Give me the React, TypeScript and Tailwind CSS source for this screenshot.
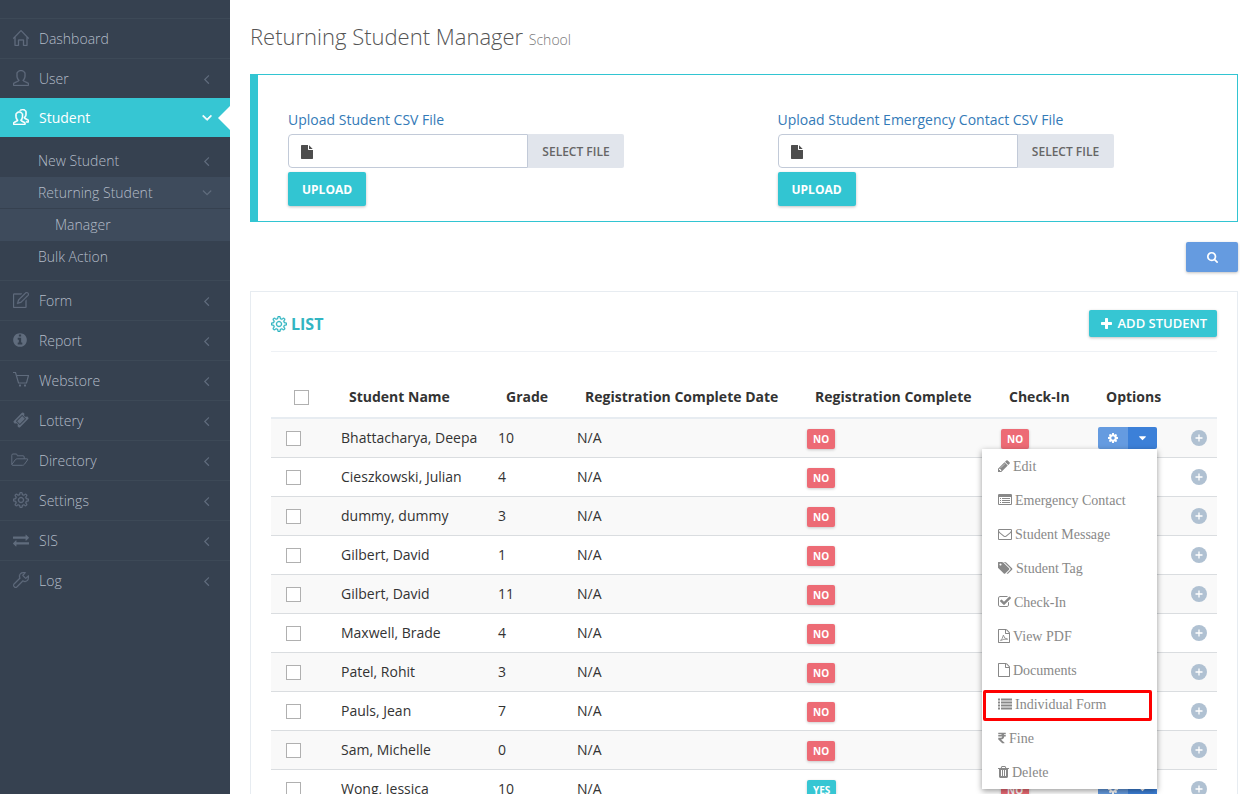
import { useState } from 'react';
import type { ReactNode } from 'react';
import { SlHome, SlNote, SlPeople, SlSettings, SlUser, SlWrench } from 'react-icons/sl';
import { FaRupeeSign } from 'react-icons/fa';

// Font Awesome 4 glyphs on their 1792 grid, w is the glyph's own advance
const GLYPHS = {
  angleLeft: { w: 768, d: 'M1203 544q0 13-10 23l-393 393 393 393q10 10 10 23t-10 23l-50 50q-10 10-23 10t-23-10l-466-466q-10-10-10-23t10-23l466-466q10-10 23-10t23 10l50 50q10 10 10 23z' },
  info: { w: 1536, d: 'M1152 1376v-160q0-14-9-23t-23-9h-96v-512q0-14-9-23t-23-9h-320q-14 0-23 9t-9 23v160q0 14 9 23t23 9h96v320h-96q-14 0-23 9t-9 23v160q0 14 9 23t23 9h448q14 0 23-9t9-23zm-128-896v-160q0-14-9-23t-23-9h-192q-14 0-23 9t-9 23v160q0 14 9 23t23 9h192q14 0 23-9t9-23zm640 416q0 209-103 385.5t-279.5 279.5-385.5 103-385.5-103-279.5-279.5-103-385.5 103-385.5 279.5-279.5 385.5-103 385.5 103 279.5 279.5 103 385.5z' },
  ticket: { w: 1792, d: 'M1024 452l316 316-572 572-316-316zm-211 979l618-618q19-19 19-45t-19-45l-362-362q-18-18-45-18t-45 18l-618 618q-19 19-19 45t19 45l362 362q18 18 45 18t45-18zm889-637l-907 908q-37 37-90.5 37t-90.5-37l-126-125q56-56 56-136t-56-136-136-56-136 56l-125-126q-37-37-37-90.5t37-90.5l907-906q37-37 90.5-37t90.5 37l125 125q-56 56-56 136t56 136 136 56 136-56l126 125q37 37 37 90.5t-37 90.5z' },
  exchange: { w: 1792, d: 'M1792 1184v192q0 13-9.5 22.5t-22.5 9.5h-1376v192q0 13-9.5 22.5t-22.5 9.5q-12 0-24-10l-319-320q-9-9-9-22 0-14 9-23l320-320q9-9 23-9 13 0 22.5 9.5t9.5 22.5v192h1376q13 0 22.5 9.5t9.5 22.5zm0-544q0 14-9 23l-320 320q-9 9-23 9-13 0-22.5-9.5t-9.5-22.5v-192h-1376q-13 0-22.5-9.5t-9.5-22.5v-192q0-13 9.5-22.5t22.5-9.5h1376v-192q0-14 9-23t23-9q12 0 24 10l319 319q9 9 9 23z' },
  file: { w: 1536, d: 'M1152 512v-472q22 14 36 28l408 408q14 14 28 36h-472zm-128 32q0 40 28 68t68 28h544v1056q0 40-28 68t-68 28h-1344q-40 0-68-28t-28-68v-1600q0-40 28-68t68-28h800v544z' },
  search: { w: 1664, d: 'M1216 832q0-185-131.5-316.5t-316.5-131.5-316.5 131.5-131.5 316.5 131.5 316.5 316.5 131.5 316.5-131.5 131.5-316.5zm512 832q0 52-38 90t-90 38q-54 0-90-38l-343-342q-179 124-399 124-143 0-273.5-55.5t-225-150-150-225-55.5-273.5 55.5-273.5 150-225 225-150 273.5-55.5 273.5 55.5 225 150 150 225 55.5 273.5q0 220-124 399l343 343q37 37 37 90z' },
  plus: { w: 1408, d: 'M1600 736v192q0 40-28 68t-68 28h-416v416q0 40-28 68t-68 28h-192q-40 0-68-28t-28-68v-416h-416q-40 0-68-28t-28-68v-192q0-40 28-68t68-28h416v-416q0-40 28-68t68-28h192q40 0 68 28t28 68v416h416q40 0 68 28t28 68z' },
  cog: { w: 1536, d: 'M1152 896q0-106-75-181t-181-75-181 75-75 181 75 181 181 75 181-75 75-181zm512-109v222q0 12-8 23t-20 13l-185 28q-19 54-39 91 35 50 107 138 10 12 10 25t-9 23q-27 37-99 108t-94 71q-12 0-26-9l-138-108q-44 23-91 38-16 136-29 186-7 28-36 28h-222q-14 0-24.5-8.5t-11.5-21.5l-28-184q-49-16-90-37l-141 107q-10 9-25 9-14 0-25-11-126-114-165-168-7-10-7-23 0-12 8-23 15-21 51-66.5t54-70.5q-27-50-41-99l-183-27q-13-2-21-12.5t-8-23.5v-222q0-12 8-23t19-13l186-28q14-46 39-92-40-57-107-138-10-12-10-24 0-10 9-23 26-36 98.5-107.5t94.5-71.5q13 0 26 10l138 107q44-23 91-38 16-136 29-186 7-28 36-28h222q14 0 24.5 8.5t11.5 21.5l28 184q49 16 90 37l142-107q9-9 24-9 13 0 25 10 129 119 165 170 7 8 7 22 0 12-8 23-15 21-51 66.5t-54 70.5q26 50 41 98l183 28q13 2 21 12.5t8 23.5z' },
  caret: { w: 1024, d: 'M1408 704q0 26-19 45l-448 448q-19 19-45 19t-45-19l-448-448q-19-19-19-45t19-45 45-19h896q26 0 45 19t19 45z' },
  pencil: { w: 1536, d: 'M491 1536l91-91-235-235-91 91v107h128v128h107zm523-928q0-22-22-22-10 0-17 7l-542 542q-7 7-7 17 0 22 22 22 10 0 17-7l542-542q7-7 7-17zm-54-192l416 416-832 832h-416v-416zm683 96q0 53-37 90l-166 166-416-416 166-165q36-38 90-38 53 0 91 38l235 234q37 39 37 91z' },
  listAlt: { w: 1792, d: 'M256 640h128v128h-128zM256 896h128v128h-128zM256 1152h128v128h-128zM512 640h1024v128h-1024zM512 896h1024v128h-1024zM512 1152h1024v128h-1024zM1664 1376v-832q0-13-9.5-22.5t-22.5-9.5h-1472q-13 0-22.5 9.5t-9.5 22.5v832q0 13 9.5 22.5t22.5 9.5h1472q13 0 22.5-9.5t9.5-22.5zM1792 288v1088q0 66-47 113t-113 47h-1472q-66 0-113-47t-47-113v-1088q0-66 47-113t113-47h1472q66 0 113 47t47 113z' },
  envelope: { w: 1792, d: 'M1664 1504v-768q-32 36-69 66-268 206-426 338-51 43-83 67t-86.5 48.5-102.5 24.5h-2q-48 0-102.5-24.5t-86.5-48.5-83-67q-158-132-426-338-37-30-69-66v768q0 13 9.5 22.5t22.5 9.5h1472q13 0 22.5-9.5t9.5-22.5zm0-1051v-24.5l-.5-13-3-12.5-5.5-9-9-7.5-14-2.5h-1472q-13 0-22.5 9.5t-9.5 22.5q0 168 147 284 193 152 401 317 6 5 35 29.5t46 37.5 44.5 31.5 50.5 27.5 43 9h2q20 0 43-9t50.5-27.5 44.5-31.5 46-37.5 35-29.5q208-165 401-317 54-43 100.5-115.5t46.5-131.5zm128-37v1088q0 66-47 113t-113 47h-1472q-66 0-113-47t-47-113v-1088q0-66 47-113t113-47h1472q66 0 113 47t47 113z' },
  tags: { w: 1920, d: 'M448 448q0-53-37.5-90.5t-90.5-37.5-90.5 37.5-37.5 90.5 37.5 90.5 90.5 37.5 90.5-37.5 37.5-90.5zm1003 576q0 53-37 90l-491 492q-39 37-91 37-53 0-90-37l-715-716q-38-37-64.5-101t-26.5-117v-416q0-52 38-90t90-38h416q53 0 117 26.5t102 64.5l715 714q37 39 37 91zm384 0q0 53-37 90l-491 492q-39 37-91 37-36 0-59-14t-53-45l470-470q37-37 37-90 0-52-37-91l-715-714q-38-38-102-64.5t-117-26.5h224q53 0 117 26.5t102 64.5l715 714q37 39 37 91z' },
  check: { w: 1664, d: 'M1472 930v318q0 119-84.5 203.5t-203.5 84.5h-832q-119 0-203.5-84.5t-84.5-203.5v-832q0-119 84.5-203.5t203.5-84.5h832q63 0 117 25 15 7 18 23 3 17-9 29l-49 49q-10 10-23 10-3 0-9-2-23-6-45-6h-832q-66 0-113 47t-47 113v832q0 66 47 113t113 47h832q66 0 113-47t47-113v-254q0-13 9-22l64-64q10-10 23-10 6 0 12 3 20 8 20 29zm231-489l-814 814q-24 24-57 24t-57-24l-430-430q-24-24-24-57t24-57l110-110q24-24 57-24t57 24l263 263 647-647q24-24 57-24t57 24l110 110q24 24 24 57t-24 57z' },
  fileO: { w: 1536, d: 'M1596 380q28 28 48 76t20 88v1152q0 40-28 68t-68 28h-1344q-40 0-68-28t-28-68v-1600q0-40 28-68t68-28h896q40 0 88 20t76 48zm-444-244v376h376q-10-29-22-41l-313-313q-12-12-41-22zm384 1528v-1024h-416q-40 0-68-28t-28-68v-416h-768v1536h1280z' },
  list: { w: 1792, d: 'M0 192h256v256h-256zM0 576h256v256h-256zM0 960h256v256h-256zM0 1344h256v256h-256zM384 192h1408v256h-1408zM384 576h1408v256h-1408zM384 960h1408v256h-1408zM384 1344h1408v256h-1408z' },
  trash: { w: 1408, d: 'M704 1376v-704q0-14-9-23t-23-9h-64q-14 0-23 9t-9 23v704q0 14 9 23t23 9h64q14 0 23-9t9-23zm256 0v-704q0-14-9-23t-23-9h-64q-14 0-23 9t-9 23v704q0 14 9 23t23 9h64q14 0 23-9t9-23zm256 0v-704q0-14-9-23t-23-9h-64q-14 0-23 9t-9 23v704q0 14 9 23t23 9h64q14 0 23-9t9-23zm-544-992h448l-48-117q-7-9-17-11h-317q-10 2-17 11zm928 32v64q0 14-9 23t-23 9h-96v948q0 83-47 143.5t-113 60.5h-832q-66 0-113-58.5t-47-141.5v-952h-96q-14 0-23-9t-9-23v-64q0-14 9-23t23-9h309l70-167q15-37 54-63t79-26h320q40 0 79 26t54 63l70 167h309q14 0 23 9t9 23z' },
};

type GlyphName = keyof typeof GLYPHS;

function Glyph({ name, size = 14, className = '', children }: { name: GlyphName; size?: number; className?: string; children?: ReactNode }) {
  const { w, d } = GLYPHS[name];
  const x = w > 1792 ? 0 : (1792 - w) / 2;
  return (
    <svg
      viewBox={`${x} 0 ${w} 1792`}
      width={Math.round((size * w) / 1792)}
      height={size}
      fill="currentColor"
      className={`shrink-0 ${className}`}
      aria-hidden="true"
    >
      <path d={d} />
      {children}
    </svg>
  );
}

function CartIcon() {
  return (
    <svg viewBox="0 0 16 16" width="16" height="16" fill="none" stroke="currentColor" aria-hidden="true">
      <path d="M0 .5h2.5l3 10.5h8l2-7.5H4" strokeWidth="1.2" />
      <path d="M6 13.5h2M7 12.5v2M11 13.5h2M12 12.5v2" strokeWidth="1.5" />
    </svg>
  );
}

function FolderIcon() {
  return (
    <svg viewBox="0 0 18 14" width="18" height="14" fill="none" stroke="currentColor" strokeLinejoin="round" aria-hidden="true" className="-ml-0.5">
      <path d="M.8 11.5V2.2Q.8 1 2 1h3q1.2 0 1.2 1.2v.6H12q1.2 0 1.2 1.2v1.8M.8 11.5l3.4-4.600q.7-1.1 2-1.1h9.600q1.5 0 .7 1.2l-3 4.200q-.8 1.1-2 1.1H2q-1.2 0-1.2-.8z" />
    </svg>
  );
}

const NAV_TOP = [
  { label: 'Dashboard', icon: <SlHome size={16} strokeWidth={20} />, arrow: false },
  { label: 'User', icon: <SlUser size={16} strokeWidth={20} />, arrow: true },
];

const NAV_BOTTOM = [
  { label: 'Form', icon: <SlNote size={16} strokeWidth={20} /> },
  { label: 'Report', icon: <Glyph name="info" size={16} /> },
  { label: 'Webstore', icon: <CartIcon /> },
  { label: 'Lottery', icon: <Glyph name="ticket" size={16} /> },
  { label: 'Directory', icon: <FolderIcon /> },
  { label: 'Settings', icon: <SlSettings size={16} strokeWidth={20} /> },
  { label: 'SIS', icon: <Glyph name="exchange" size={16} /> },
  { label: 'Log', icon: <SlWrench size={16} strokeWidth={20} /> },
];

const STUDENTS = [
  { name: 'Bhattacharya, Deepa', grade: 10, complete: false },
  { name: 'Cieszkowski, Julian', grade: 4, complete: false },
  { name: 'dummy, dummy', grade: 3, complete: false },
  { name: 'Gilbert, David', grade: 1, complete: false },
  { name: 'Gilbert, David', grade: 11, complete: false },
  { name: 'Maxwell, Brade', grade: 4, complete: false },
  { name: 'Patel, Rohit', grade: 3, complete: false },
  { name: 'Pauls, Jean', grade: 7, complete: false },
  { name: 'Sam, Michelle', grade: 0, complete: false },
  { name: 'Wong, Jessica', grade: 10, complete: true },
];

const MENU = [
  { label: 'Edit', icon: <Glyph name="pencil" /> },
  { label: 'Emergency Contact', icon: <Glyph name="listAlt" /> },
  { label: 'Student Message', icon: <Glyph name="envelope" /> },
  { label: 'Student Tag', icon: <Glyph name="tags" /> },
  { label: 'Check-In', icon: <Glyph name="check" /> },
  {
    label: 'View PDF',
    icon: (
      <Glyph name="fileO">
        <path d="M420 1480q280-180 400-700 60 480 540 520-500-60-900 180" fill="none" stroke="currentColor" strokeWidth="110" />
      </Glyph>
    ),
  },
  { label: 'Documents', icon: <Glyph name="fileO" /> },
  { label: 'Individual Form', icon: <Glyph name="list" />, marked: true },
  { label: 'Fine', icon: <FaRupeeSign size={12} className="-mx-0.5" /> },
  { label: 'Delete', icon: <Glyph name="trash" /> },
];

function NavItem({ label, icon, arrow = true }: { label: string; icon: ReactNode; arrow?: boolean }) {
  return (
    <li className="border-t border-[#3d4957]">
      <a href="#" className="flex h-[39px] items-center pl-[13px] pr-5">
        <span className="flex w-[26px] shrink-0 pb-0.5 text-[#606c7d]">{icon}</span>
        <span className="flex-1">{label}</span>
        {arrow && <Glyph name="angleLeft" size={16} className="text-[#606c7d]" />}
      </a>
    </li>
  );
}

function Sidebar() {
  return (
    <nav className="w-[230px] shrink-0 bg-[#364150] pt-[18px] text-sm font-light text-[#b4bcc8]">
      <ul>
        {NAV_TOP.map(item => <NavItem key={item.label} {...item} />)}
        <li>
          <a href="#" className="relative flex h-[39px] items-center bg-[#36c6d3] pl-[13px] pr-5 text-white">
            <span className="flex w-[26px] shrink-0 pb-0.5"><SlPeople size={16} strokeWidth={40} /></span>
            <span className="flex-1 font-normal">Student</span>
            <Glyph name="angleLeft" size={16} className="-rotate-90 stroke-current stroke-[80]" />
            <span className="absolute right-0 top-2 border-y-[12px] border-r-[12px] border-y-transparent border-r-white" />
          </a>
          <ul className="pb-[7px] pt-2">
            <li>
              <a href="#" className="flex h-8 items-center pl-[38px] pr-5">
                <span className="flex-1">New Student</span>
                <Glyph name="angleLeft" size={16} className="text-[#606c7d]" />
              </a>
            </li>
            <li>
              <a href="#" className="flex h-8 items-center border-b border-[#364150] bg-[#3e4b5c] pl-[38px] pr-5">
                <span className="flex-1">Returning Student</span>
                <Glyph name="angleLeft" size={16} className="-rotate-90 text-[#606c7d]" />
              </a>
              <a href="#" className="flex h-8 items-center bg-[#3e4b5c] pl-[55px]">Manager</a>
            </li>
            <li>
              <a href="#" className="flex h-8 items-center pl-[38px]">Bulk Action</a>
            </li>
          </ul>
        </li>
        {NAV_BOTTOM.map(item => <NavItem key={item.label} {...item} />)}
      </ul>
    </nav>
  );
}

function UploadField({ id, label }: { id: string; label: string }) {
  return (
    <div className="px-[30px]">
      <label htmlFor={id} className="flex h-7 items-center text-sm text-[#337ab7]">{label}</label>
      <div className="flex">
        <div className="relative w-60">
          <input id={id} readOnly className="h-[34px] w-full rounded-l border border-[#c2cad8] bg-white pl-8 text-sm outline-none" />
          <Glyph name="file" className="pointer-events-none absolute left-[13px] top-[11px] text-[#4d4d4d]" />
        </div>
        <button className="h-[34px] w-24 rounded-r-xs bg-[#e1e5ec] pt-px text-xs font-semibold text-[#666]">SELECT FILE</button>
      </div>
      <button className="mt-1 h-[34px] rounded-xs bg-[#32c5d2] px-3.5 pt-px text-xs font-bold text-white shadow-[0_1px_3px_rgba(0,0,0,0.25)]">UPLOAD</button>
    </div>
  );
}

function Tick({ label }: { label: string }) {
  return (
    <input
      type="checkbox"
      aria-label={label}
      className="block size-[15px] appearance-none border border-[#b0b0b0] bg-white checked:bg-[#36c6d3]"
    />
  );
}

function Badge({ yes }: { yes: boolean }) {
  return (
    <span
      className={`mt-0.5 inline-flex h-5 items-center rounded-xs px-1.5 text-[10px] font-bold text-white shadow-[0_1px_3px_rgba(0,0,0,0.2)] ${yes ? 'bg-[#36c6d3]' : 'bg-[#ed6b75]'}`}
    >
      {yes ? 'YES' : 'NO'}
    </span>
  );
}

function OptionsMenu() {
  return (
    <ul className="absolute right-0 top-full z-10 w-[175px] bg-white font-['Liberation_Serif',serif] text-sm text-[#888] shadow-[0_2px_6px_rgba(0,0,0,0.4)]">
      {MENU.map(item => (
        <li key={item.label} className="relative">
          <a href="#" className="flex h-[34px] items-center gap-[3px] px-4 pt-0.5">
            <span className="pb-0.5">{item.icon}</span>
            <span>{item.label}</span>
          </a>
          {item.marked && (
            <span className="pointer-events-none absolute bottom-0 left-px right-[5px] top-[3px] rounded-xs border-3 border-[#fe0000]" />
          )}
        </li>
      ))}
    </ul>
  );
}

export default function App() {
  const [openRow, setOpenRow] = useState<number | null>(0);

  return (
    <div className="flex h-screen overflow-hidden bg-white font-['Open_Sans',sans-serif] text-sm text-[#333]">
      <Sidebar />

      <main className="min-w-0 flex-1 pl-5 pr-0.5">
        <h1 className="pb-[21px] pt-[19px] text-[22px] font-light leading-[34px] text-[#555]">
          Returning Student Manager <small className="text-sm text-[#777]">School</small>
        </h1>

        {/* CSV uploads */}
        <section className="grid grid-cols-2 border border-l-8 border-[#32c5d2] pb-[15px] pt-[31px]">
          <UploadField id="student-csv" label="Upload Student CSV File" />
          <UploadField id="contact-csv" label="Upload Student Emergency Contact CSV File" />
        </section>

        <div className="flex justify-end pb-[19px] pt-5">
          <button aria-label="Search" className="flex h-[30px] w-[52px] items-center justify-center rounded-xs bg-[#659be0] text-white shadow-[0_1px_3px_rgba(0,0,0,0.25)]">
            <Glyph name="search" size={12} />
          </button>
        </div>

        {/* Student list */}
        <section className="border border-[#e7ecf1] px-5">
          <header className="flex h-[60px] items-center justify-between border-b border-[#eef1f5] pt-1">
            <h2 className="flex items-center gap-1 text-base font-bold text-[#32b5c2]">
              <SlSettings size={16} strokeWidth={20} />
              LIST
            </h2>
            <button className="flex h-[27px] items-center gap-1.5 rounded-xs bg-[#36c6d3] pl-3 pr-2.5 text-[13px] font-semibold text-white shadow-[0_1px_3px_rgba(0,0,0,0.25)]">
              <Glyph name="plus" />
              ADD STUDENT
            </button>
          </header>

          <table className="mt-[25px] w-full table-fixed border-separate border-spacing-0 text-left">
            <thead>
              <tr className="h-[42px] [&>th]:border-b-2 [&>th]:border-[#e7ecf1] [&>th]:px-[18px] [&>th]:font-bold [&>th]:whitespace-nowrap">
                <th className="w-[60px] !pl-[23px] !pr-0"><Tick label="Select all" /></th>
                <th>Student Name</th>
                <th className="w-[79px]">Grade</th>
                <th className="w-[230px]">Registration Complete Date</th>
                <th className="w-[194px]">Registration Complete</th>
                <th className="w-[97px]">Check-In</th>
                <th className="w-[93px]">Options</th>
                <th className="w-9" />
              </tr>
            </thead>
            <tbody>
              {STUDENTS.map((s, i) => (
                <tr key={i} className="h-[39px] odd:bg-[#f9f9f9] [&>td]:border-b [&>td]:border-[#dadde0] [&>td]:px-2.5">
                  <td className="!pl-[15px]"><Tick label={s.name} /></td>
                  <td className="whitespace-nowrap">{s.name}</td>
                  <td>{s.grade}</td>
                  <td>N/A</td>
                  <td><Badge yes={s.complete} /></td>
                  <td><Badge yes={false} /></td>
                  <td>
                    <div className="relative flex w-[59px]">
                      <button aria-label="Options" className="flex h-[22px] w-[30px] items-center justify-center rounded-l-xs bg-[#659be0] text-white">
                        <Glyph name="cog" size={12} />
                      </button>
                      <button
                        aria-label="Toggle menu"
                        onClick={() => setOpenRow(openRow === i ? null : i)}
                        className="flex h-[22px] flex-1 items-center justify-center rounded-r-xs bg-[#3c80d8] text-white"
                      >
                        <Glyph name="caret" size={12} />
                      </button>
                      {openRow === i && <OptionsMenu />}
                    </div>
                  </td>
                  <td>
                    <button aria-label="Show details" className="flex size-4 items-center justify-center rounded-full bg-[#b0c1d2] text-white">
                      <svg viewBox="0 0 8 8" width="8" height="8" stroke="currentColor" aria-hidden="true">
                        <path d="M4 .5v7M.5 4h7" strokeWidth="1.3" />
                      </svg>
                    </button>
                  </td>
                </tr>
              ))}
            </tbody>
          </table>
        </section>
      </main>
    </div>
  );
}
